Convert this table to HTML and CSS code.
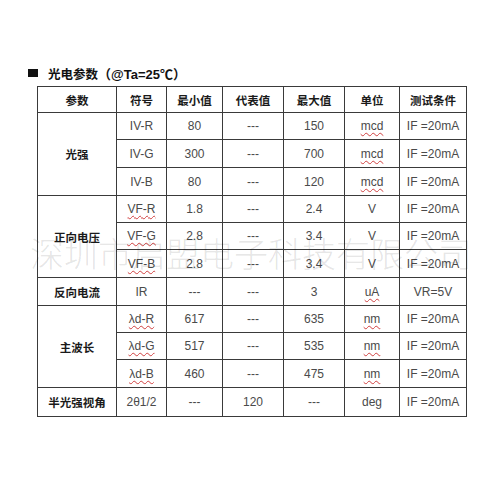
FILE: index.html
```html
<!DOCTYPE html>
<html>
<head>
<meta charset="utf-8">
<link rel="stylesheet" href="styles.css">
</head>
<body>
<div class="page">
  <div class="title"><span class="sq"></span><span class="cn">光电参数</span><span class="en">（@Ta=25℃）</span></div>
  <table class="spec">
    <colgroup>
      <col class="c1"><col class="c2"><col class="c3"><col class="c4"><col class="c5"><col class="c6"><col class="c7">
    </colgroup>
    <tr class="head">
      <th>参数</th><th>符号</th><th>最小值</th><th>代表值</th><th>最大值</th><th>单位</th><th>测试条件</th>
    </tr>
    <tr class="h27"><th rowspan="3">光强</th><td>IV-R</td><td>80</td><td>---</td><td>150</td><td><span class="sp">mcd</span></td><td>IF =20mA</td></tr>
    <tr class="h28"><td>IV-G</td><td>300</td><td>---</td><td>700</td><td><span class="sp">mcd</span></td><td>IF =20mA</td></tr>
    <tr class="h28"><td>IV-B</td><td>80</td><td>---</td><td>120</td><td><span class="sp">mcd</span></td><td>IF =20mA</td></tr>
    <tr class="h27"><th rowspan="3">正向电压</th><td><span class="sp">VF-R</span></td><td>1.8</td><td>---</td><td>2.4</td><td>V</td><td>IF =20mA</td></tr>
    <tr class="h27"><td><span class="sp">VF-G</span></td><td>2.8</td><td>---</td><td>3.4</td><td>V</td><td>IF =20mA</td></tr>
    <tr class="h28"><td><span class="sp">VF-B</span></td><td>2.8</td><td>---</td><td>3.4</td><td>V</td><td>IF =20mA</td></tr>
    <tr class="h28"><th>反向电流</th><td>IR</td><td>---</td><td>---</td><td>3</td><td><span class="sp">uA</span></td><td>VR=5V</td></tr>
    <tr class="h27"><th rowspan="3">主波长</th><td><span class="sp">λd-R</span></td><td>617</td><td>---</td><td>635</td><td><span class="sp">nm</span></td><td>IF =20mA</td></tr>
    <tr class="h27"><td><span class="sp">λd-G</span></td><td>517</td><td>---</td><td>535</td><td><span class="sp">nm</span></td><td>IF =20mA</td></tr>
    <tr class="h28"><td><span class="sp">λd-B</span></td><td>460</td><td>---</td><td>475</td><td><span class="sp">nm</span></td><td>IF =20mA</td></tr>
    <tr class="h29"><th>半光强视角</th><td>2θ1/2</td><td>---</td><td>120</td><td>---</td><td>deg</td><td>IF =20mA</td></tr>
  </table>
  <div class="watermark">深圳市启盟电子科技有限公司</div>
</div>
</body>
</html>
```

FILE: styles.css
```css
html, body {
  margin: 0;
  padding: 0;
  background: #fff;
}
.page {
  position: relative;
  width: 500px;
  height: 500px;
  padding: 64px 0 0 28px;
  box-sizing: border-box;
}
.title {
  display: flex;
  align-items: center;
  height: 18px;
  font-weight: bold;
  color: #111;
}
.sq {
  display: inline-block;
  width: 10px;
  height: 8px;
  background: #111;
  margin-right: 10px;
}
.cn {
  font-family: "Noto Sans CJK SC", sans-serif;
  font-size: 12.5px;
}
.en {
  font-family: "Liberation Sans", "Noto Sans CJK SC", sans-serif;
  font-size: 13px;
}
.spec {
  margin: 4px 0 0 9px;
  border-collapse: collapse;
  table-layout: fixed;
  width: 429px;
  color: #4a4a4a;
  font-family: "Liberation Sans", Arial, sans-serif;
  font-size: 12px;
}
.c1 { width: 79px; }
.c2 { width: 50px; }
.c3 { width: 56px; }
.c4 { width: 61px; }
.c5 { width: 61px; }
.c6 { width: 55px; }
.c7 { width: 67px; }
.spec th, .spec td {
  border: 1px solid #3a3a3a;
  text-align: center;
  padding: 0;
  vertical-align: middle;
}
.spec th {
  font-family: "Noto Sans CJK SC", sans-serif;
  font-weight: bold;
  font-size: 11.5px;
  color: #1a1a1a;
}
.head { height: 26px; }
.h27 { height: 27px; }
.h28 { height: 28px; }
.h29 { height: 29px; }
.sp {
  text-decoration: underline wavy #d04040;
  text-decoration-thickness: 1px;
  text-underline-offset: 2px;
}
.watermark {
  position: absolute;
  left: 30px;
  top: 233px;
  font-family: "Noto Sans CJK SC", sans-serif;
  font-weight: 300;
  font-size: 34px;
  line-height: 40px;
  color: rgba(0, 0, 0, 0.11);
  white-space: nowrap;
  pointer-events: none;
}
```
